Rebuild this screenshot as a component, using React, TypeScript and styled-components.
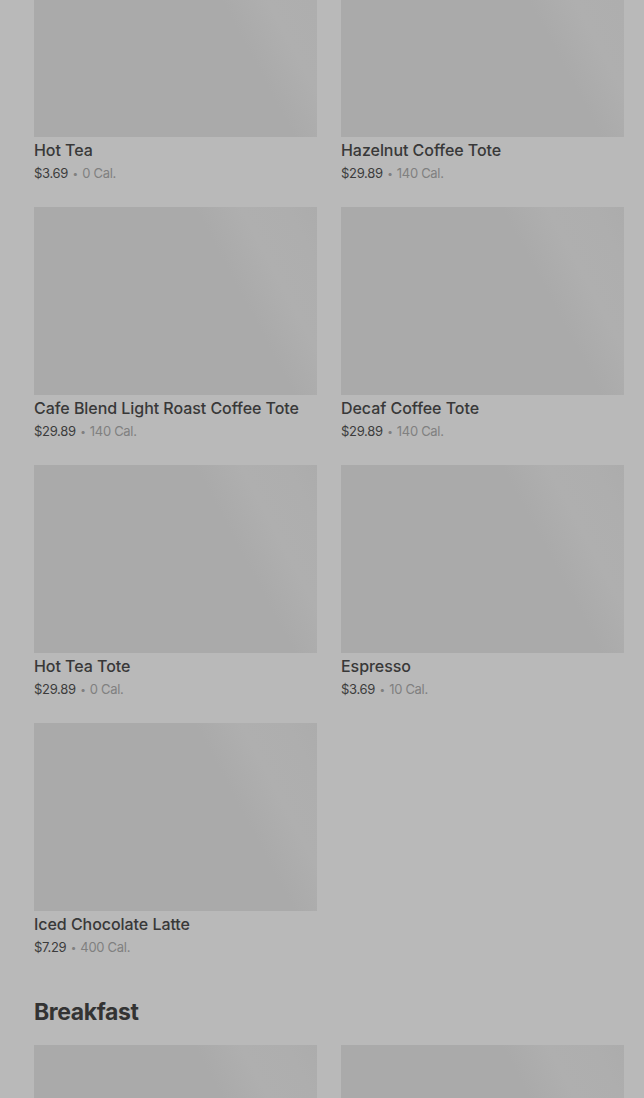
import styled, { createGlobalStyle } from "styled-components";

const GlobalStyle = createGlobalStyle`
    html, body {
        margin: 0;
        padding: 0;
        background: #b9b9b9;
        font-family: Inter, "Noto Sans", Roboto, sans-serif;
        overflow: hidden;
    }
`;

const Page = styled.div`
    background: #b9b9b9;
    min-height: 1098px;
    padding: 0 20px 0 34px;
    margin-top: -51px;
`;

const Section = styled.section`
    margin-bottom: 39px;
`;

const SectionTitle = styled.h2`
    margin: 0 0 17px;
    font-size: 23px;
    line-height: 32px;
    font-weight: 700;
    color: #333333;
    letter-spacing: -0.4px;
`;

const Grid = styled.div`
    display: grid;
    grid-template-columns: repeat(2, 283px);
    column-gap: 24px;
    row-gap: 24px;
`;

const Card = styled.div`
    display: flex;
    flex-direction: column;
`;

const Thumb = styled.div`
    height: 188px;
    background: linear-gradient(
        62deg,
        #aaaaaa 0%,
        #aaaaaa 68%,
        #afafaf 80%,
        #aeaeae 92%,
        #acacac 100%
    );
`;

const Name = styled.div`
    margin-top: 3px;
    font-size: 16px;
    line-height: 20px;
    font-weight: 500;
    color: #383838;
    letter-spacing: -0.05px;
`;

const Meta = styled.div`
    margin-top: 3px;
    height: 20px;
    font-size: 13px;
    line-height: 20px;
    color: #3c3c3c;
    letter-spacing: -0.3px;
`;

const Cal = styled.span`
    color: #808080;
`;

const Dot = styled.span`
    font-size: 10px;
    line-height: 0;
    vertical-align: 1px;
    margin: 0 1px;
`;

type Item = { name: string; price: string; cal: string };

const drinks: Item[] = [
    { name: "Hot Tea", price: "$3.69", cal: "0 Cal." },
    { name: "Hazelnut Coffee Tote", price: "$29.89", cal: "140 Cal." },
    { name: "Cafe Blend Light Roast Coffee Tote", price: "$29.89", cal: "140 Cal." },
    { name: "Decaf Coffee Tote", price: "$29.89", cal: "140 Cal." },
    { name: "Hot Tea Tote", price: "$29.89", cal: "0 Cal." },
    { name: "Espresso", price: "$3.69", cal: "10 Cal." },
    { name: "Iced Chocolate Latte", price: "$7.29", cal: "400 Cal." },
];

const MenuCard = ({ item }: { item: Item }) => (
    <Card>
        <Thumb />
        <Name>{item.name}</Name>
        <Meta>
            {item.price}
            <Cal>
                {" "}
                <Dot>•</Dot> {item.cal}
            </Cal>
        </Meta>
    </Card>
);

export default function App() {
    return (
        <>
            <GlobalStyle />
            <Page>
                <Section>
                    <Grid>
                        {drinks.map((d) => (
                            <MenuCard key={d.name} item={d} />
                        ))}
                    </Grid>
                </Section>
                <Section>
                    <SectionTitle>Breakfast</SectionTitle>
                    <Grid>
                        <Card>
                            <Thumb />
                        </Card>
                        <Card>
                            <Thumb />
                        </Card>
                    </Grid>
                </Section>
            </Page>
        </>
    );
}
